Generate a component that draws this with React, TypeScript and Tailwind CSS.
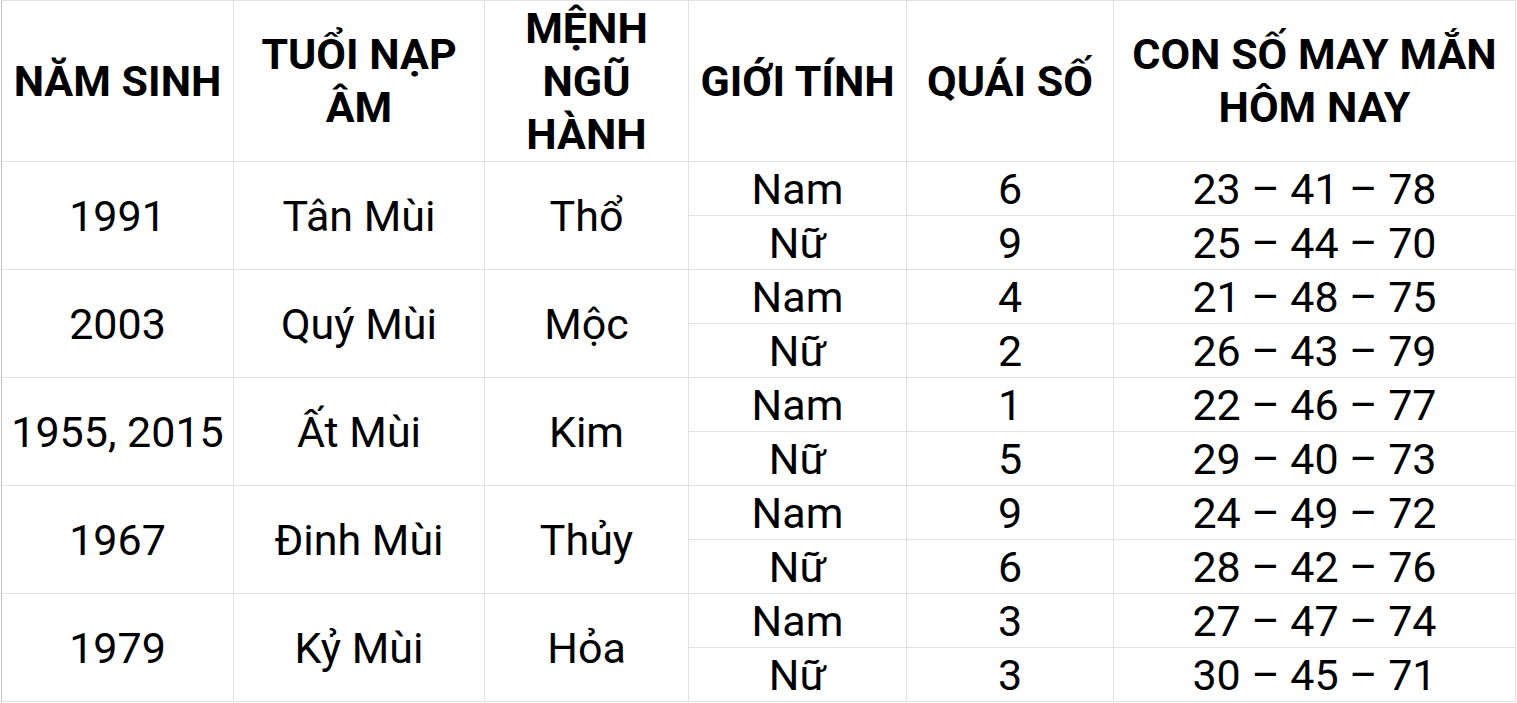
import { Fragment } from "react";

const headers: string[][] = [
  ["NĂM SINH"],
  ["TUỔI NẠP", "ÂM"],
  ["MỆNH", "NGŨ", "HÀNH"],
  ["GIỚI TÍNH"],
  ["QUÁI SỐ"],
  ["CON SỐ MAY MẮN", "HÔM NAY"],
];

type Group = {
  year: string;
  napAm: string;
  menh: string;
  rows: { gender: string; quai: string; lucky: string }[];
};

const groups: Group[] = [
  {
    year: "1991",
    napAm: "Tân Mùi",
    menh: "Thổ",
    rows: [
      { gender: "Nam", quai: "6", lucky: "23 – 41 – 78" },
      { gender: "Nữ", quai: "9", lucky: "25 – 44 – 70" },
    ],
  },
  {
    year: "2003",
    napAm: "Quý Mùi",
    menh: "Mộc",
    rows: [
      { gender: "Nam", quai: "4", lucky: "21 – 48 – 75" },
      { gender: "Nữ", quai: "2", lucky: "26 – 43 – 79" },
    ],
  },
  {
    year: "1955, 2015",
    napAm: "Ất Mùi",
    menh: "Kim",
    rows: [
      { gender: "Nam", quai: "1", lucky: "22 – 46 – 77" },
      { gender: "Nữ", quai: "5", lucky: "29 – 40 – 73" },
    ],
  },
  {
    year: "1967",
    napAm: "Đinh Mùi",
    menh: "Thủy",
    rows: [
      { gender: "Nam", quai: "9", lucky: "24 – 49 – 72" },
      { gender: "Nữ", quai: "6", lucky: "28 – 42 – 76" },
    ],
  },
  {
    year: "1979",
    napAm: "Kỷ Mùi",
    menh: "Hỏa",
    rows: [
      { gender: "Nam", quai: "3", lucky: "27 – 47 – 74" },
      { gender: "Nữ", quai: "3", lucky: "30 – 45 – 71" },
    ],
  },
];

const cell =
  "flex items-center justify-center whitespace-nowrap text-center border-r border-b border-[#e2e2e2]";

export default function App() {
  return (
    <div className="min-h-screen bg-white font-['Roboto',sans-serif] text-black">
      <div className="ml-px grid w-[1515px] grid-cols-[232px_251px_204px_218px_207px_402px] grid-rows-[161px_repeat(10,54px)] border-l border-t border-l-[#c4c4c4] border-t-[#e2e2e2] text-[43px] leading-[54px]">
        {headers.map((lines) => (
          <div key={lines.join(" ")} className={`${cell} font-bold leading-[53px]`}>
            <div>
              {lines.map((l) => (
                <span key={l} className="block">{l}</span>
              ))}
            </div>
          </div>
        ))}
        {groups.map((g) => (
          <Fragment key={g.year}>
            <div className={`${cell} row-span-2`}>{g.year}</div>
            <div className={`${cell} row-span-2`}>{g.napAm}</div>
            <div className={`${cell} row-span-2`}>{g.menh}</div>
            {g.rows.map((r, j) => (
              <Fragment key={j}>
                <div className={`${cell} ${j === 1 ? "col-start-4" : ""}`}>{r.gender}</div>
                <div className={cell}>{r.quai}</div>
                <div className={cell}>{r.lucky}</div>
              </Fragment>
            ))}
          </Fragment>
        ))}
      </div>
    </div>
  );
}
